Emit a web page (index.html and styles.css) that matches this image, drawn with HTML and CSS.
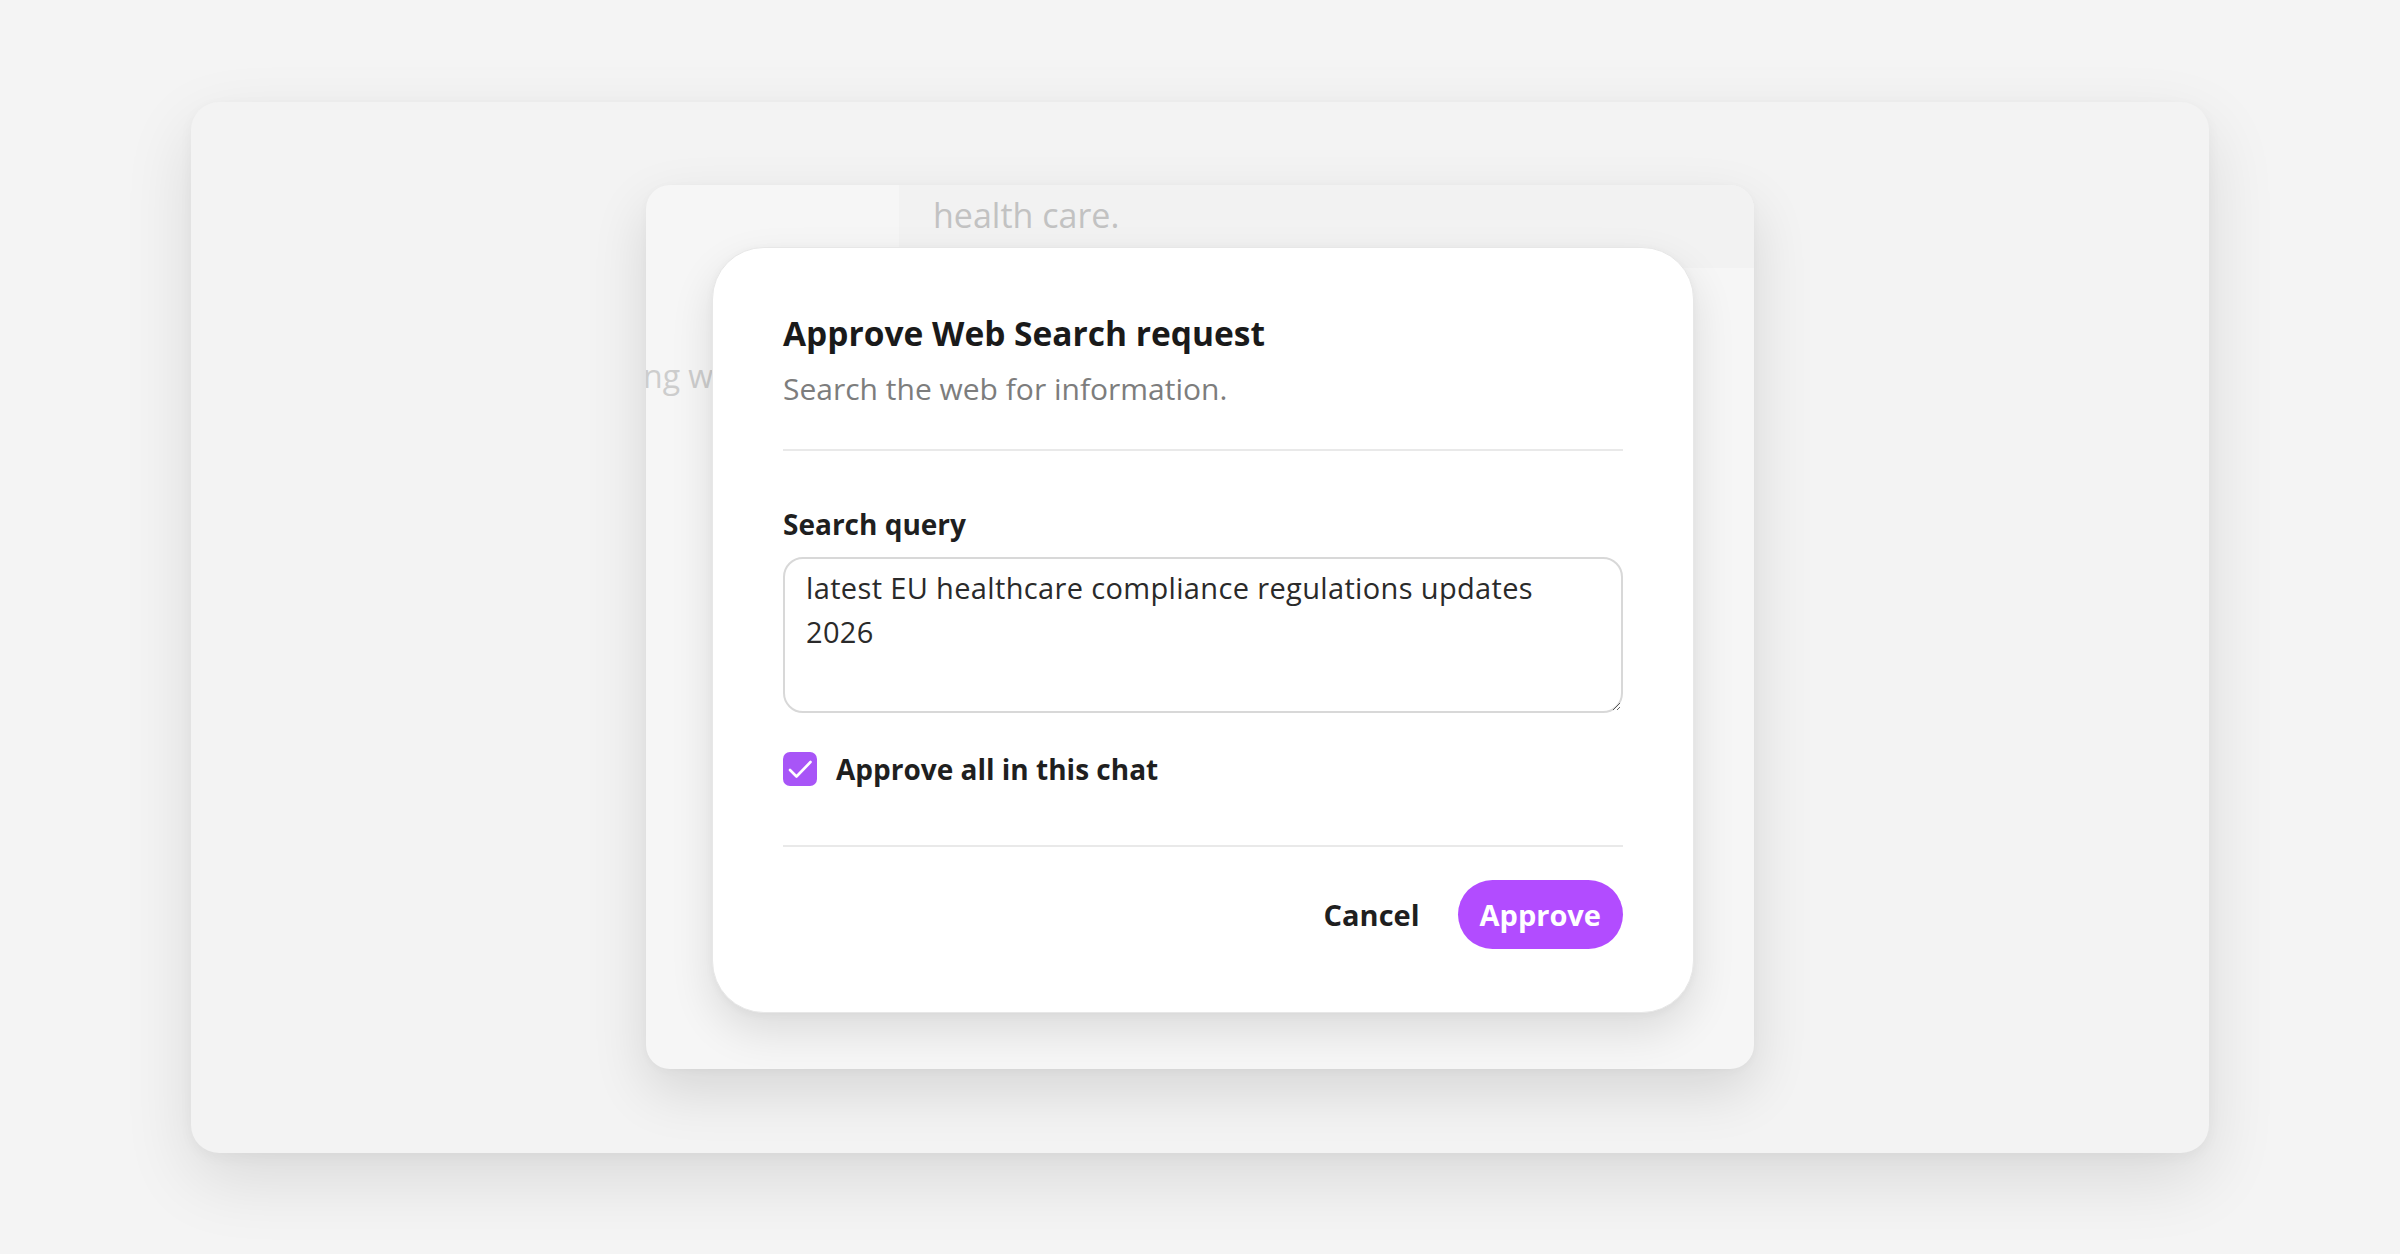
FILE: index.html
```html
<!DOCTYPE html>
<html lang="en">
<head>
<meta charset="utf-8">
<title>Approve Web Search request</title>
<link rel="stylesheet" href="styles.css">
</head>
<body>
<div class="stage">
  <div class="window">
    <div class="panel">
      <div class="chat">
        <div class="strip-row">
          <div class="strip-gap"></div>
          <div class="strip">health care.</div>
        </div>
        <div class="faded-line">ng w</div>
      </div>
      <div class="modal" role="dialog" aria-labelledby="modal-title">
        <h2 class="modal-title" id="modal-title">Approve Web Search request</h2>
        <p class="modal-sub">Search the web for information.</p>
        <hr class="divider divider-top">
        <label class="field-label" for="query">Search query</label>
        <textarea class="query" id="query">latest EU healthcare compliance regulations updates 2026</textarea>
        <label class="check-row">
          <span class="check-box">
            <svg viewBox="0 0 34 34" width="34" height="34" aria-hidden="true"><polyline points="7,18 13.5,24.5 27.5,10" fill="none" stroke="#ffffff" stroke-width="2.6" stroke-linecap="round" stroke-linejoin="round"/></svg>
          </span>
          <span class="check-text">Approve all in this chat</span>
        </label>
        <hr class="divider divider-bottom">
        <div class="actions">
          <button class="btn-cancel" type="button">Cancel</button>
          <button class="btn-approve" type="button">Approve</button>
        </div>
      </div>
    </div>
  </div>
</div>
</body>
</html>
```
FILE: styles.css
```css
html, body {
  margin: 0;
  padding: 0;
}
body {
  background: #f4f4f4;
  font-family: "Open Sans", "Noto Sans", sans-serif;
  color: #1c1c1c;
}
.stage {
  width: 2400px;
  height: 1254px;
  display: flex;
  align-items: center;
  justify-content: center;
}
.window {
  width: 2018px;
  height: 1051px;
  background: #f3f3f3;
  border-radius: 28px;
  box-shadow: 0 26px 70px rgba(0, 0, 0, 0.11), 0 4px 14px rgba(0, 0, 0, 0.04);
  display: flex;
  align-items: center;
  justify-content: center;
}
.panel {
  width: 1108px;
  height: 884px;
  background: #f6f6f6;
  border-radius: 24px;
  box-shadow: 0 22px 56px rgba(0, 0, 0, 0.12), 0 2px 8px rgba(0, 0, 0, 0.03);
  overflow: hidden;
  display: grid;
  grid-template-columns: 100%;
  grid-template-rows: 100%;
}
.chat {
  grid-area: 1 / 1;
  align-self: start;
}
.strip-row {
  display: flex;
  height: 83px;
}
.strip-gap {
  width: 253px;
  flex: none;
}
.strip {
  flex: 1;
  background: #f2f2f2;
  color: #c2c2c2;
  font-size: 34px;
  line-height: 44px;
  padding: 8px 0 0 34px;
  box-sizing: border-box;
}
.faded-line {
  margin-top: 86px;
  margin-left: -3px;
  font-size: 32px;
  line-height: 44px;
  color: #cdcdcd;
  white-space: nowrap;
}
.modal {
  grid-area: 1 / 1;
  align-self: center;
  justify-self: center;
  margin: 6px 0 0 6px;
  width: 982px;
  box-sizing: border-box;
  background: #ffffff;
  border: 1px solid #e7e7e7;
  border-radius: 52px;
  box-shadow: 0 18px 44px rgba(0, 0, 0, 0.11), 0 2px 8px rgba(0, 0, 0, 0.04);
  padding: 63px 70px 63px;
  display: flex;
  flex-direction: column;
}
.modal-title {
  margin: 0;
  font-size: 33.5px;
  line-height: 44px;
  font-weight: 700;
  color: #1a1a1a;
}
.modal-sub {
  margin: 14px 0 0;
  font-size: 30px;
  line-height: 40px;
  color: #7d7d7d;
}
.divider {
  border: 0;
  height: 2px;
  background: #e9e9e9;
  margin: 0;
}
.divider-top {
  margin-top: 40px;
}
.field-label {
  margin-top: 55px;
  font-size: 28px;
  line-height: 36px;
  font-weight: 700;
  color: #1f1f1f;
}
.query {
  margin-top: 15px;
  width: 100%;
  height: 156px;
  box-sizing: border-box;
  border: 2px solid #d8d8d8;
  border-radius: 20px;
  padding: 7px 40px 7px 21px;
  font-family: "Open Sans", "Noto Sans", sans-serif;
  font-size: 29px;
  letter-spacing: 0.35px;
  line-height: 44px;
  color: #2a2a2a;
  background: #ffffff;
  resize: vertical;
  outline: none;
}
.check-row {
  margin-top: 38px;
  display: flex;
  align-items: center;
  gap: 19px;
  height: 36px;
}
.check-box {
  width: 34px;
  height: 34px;
  border-radius: 7px;
  background: #a855f7;
  display: flex;
  flex: none;
}
.check-text {
  font-size: 28px;
  line-height: 36px;
  font-weight: 700;
  color: #1f1f1f;
}
.divider-bottom {
  margin-top: 58px;
}
.actions {
  margin-top: 33px;
  display: flex;
  justify-content: flex-end;
  align-items: center;
  gap: 38px;
}
.btn-cancel {
  border: 0;
  background: transparent;
  padding: 0;
  font-family: "Open Sans", "Noto Sans", sans-serif;
  font-size: 29px;
  font-weight: 700;
  color: #1f1f1f;
}
.btn-approve {
  border: 0;
  height: 69px;
  padding: 0 22px;
  border-radius: 35px;
  background: #b24cff;
  color: #ffffff;
  font-family: "Open Sans", "Noto Sans", sans-serif;
  font-size: 29px;
  font-weight: 700;
}
```
